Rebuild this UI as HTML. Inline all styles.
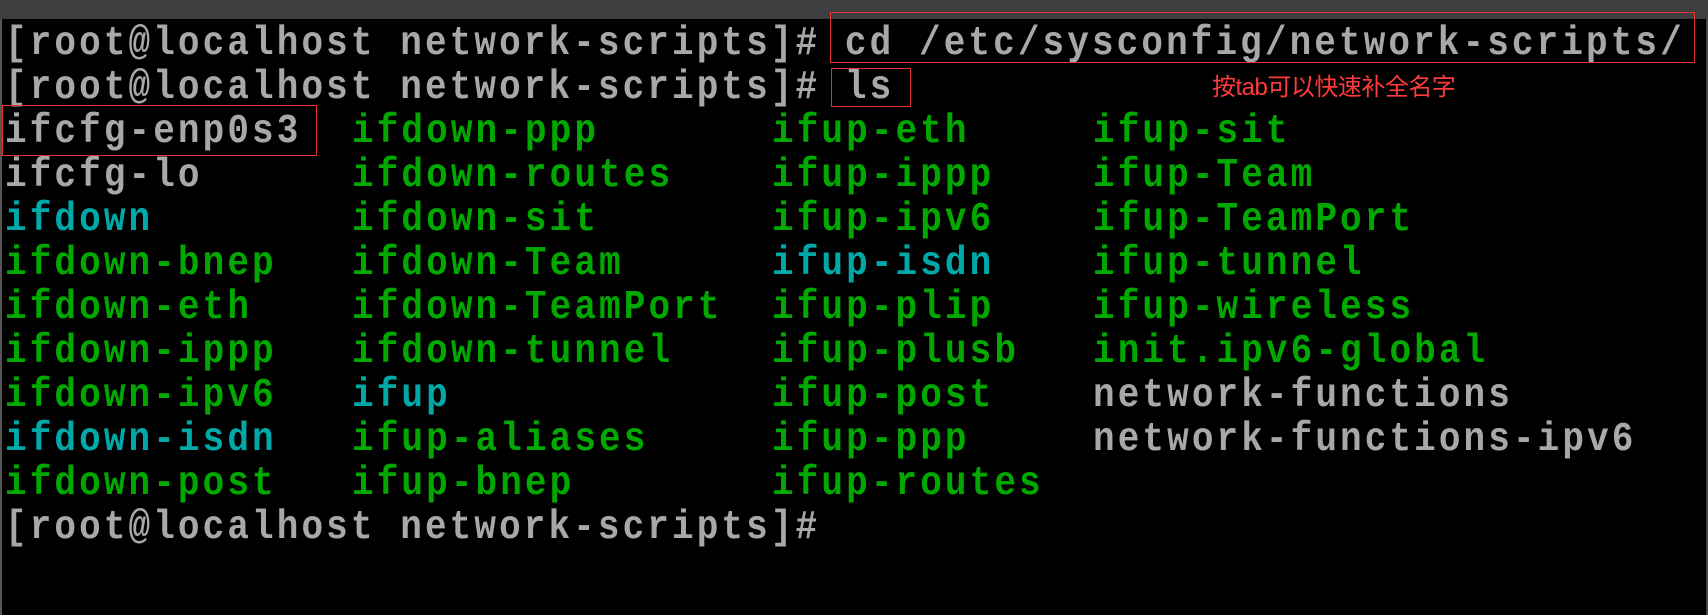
<!DOCTYPE html>
<html><head><meta charset="utf-8"><style>
html,body{margin:0;padding:0;background:#000;width:1708px;height:615px;overflow:hidden;position:relative}
.top{position:absolute;left:0;top:0;width:1708px;height:19px;background:#3d3e40}
.lb{position:absolute;left:0;top:19px;width:2px;height:596px;background:#555}
.rb{position:absolute;right:0;top:19px;width:2px;height:596px;background:#444}
.r{position:absolute;height:44px;line-height:44px;white-space:pre;font-family:"Liberation Mono",monospace;font-size:36px;font-weight:bold;letter-spacing:3.1px;transform:scaleY(1.12);transform-origin:0 50%;color:#a8a8a8}
.g{color:#00a800}.c{color:#00a8a8}
.box{position:absolute;border:1px solid #e53333}
.note{position:absolute;left:1212px;top:67px;font-family:"Liberation Sans","Noto Sans CJK SC",sans-serif;font-size:24px;color:#ff3a3a;letter-spacing:-0.5px}
</style></head><body>
<div class="top"></div><div class="lb"></div><div class="rb"></div>
<div class="r" style="left:5px;top:22px">[root@localhost network-scripts]# cd /etc/sysconfig/network-scripts/</div>
<div class="r" style="left:5px;top:66px">[root@localhost network-scripts]# ls</div>
<div class="r" style="left:5px;top:110px">ifcfg-enp0s3</div><div class="r g" style="left:352px;top:110px">ifdown-ppp</div><div class="r g" style="left:772px;top:110px">ifup-eth</div><div class="r g" style="left:1093px;top:110px">ifup-sit</div>
<div class="r" style="left:5px;top:154px">ifcfg-lo</div><div class="r g" style="left:352px;top:154px">ifdown-routes</div><div class="r g" style="left:772px;top:154px">ifup-ippp</div><div class="r g" style="left:1093px;top:154px">ifup-Team</div>
<div class="r c" style="left:5px;top:198px">ifdown</div><div class="r g" style="left:352px;top:198px">ifdown-sit</div><div class="r g" style="left:772px;top:198px">ifup-ipv6</div><div class="r g" style="left:1093px;top:198px">ifup-TeamPort</div>
<div class="r g" style="left:5px;top:242px">ifdown-bnep</div><div class="r g" style="left:352px;top:242px">ifdown-Team</div><div class="r c" style="left:772px;top:242px">ifup-isdn</div><div class="r g" style="left:1093px;top:242px">ifup-tunnel</div>
<div class="r g" style="left:5px;top:286px">ifdown-eth</div><div class="r g" style="left:352px;top:286px">ifdown-TeamPort</div><div class="r g" style="left:772px;top:286px">ifup-plip</div><div class="r g" style="left:1093px;top:286px">ifup-wireless</div>
<div class="r g" style="left:5px;top:330px">ifdown-ippp</div><div class="r g" style="left:352px;top:330px">ifdown-tunnel</div><div class="r g" style="left:772px;top:330px">ifup-plusb</div><div class="r g" style="left:1093px;top:330px">init.ipv6-global</div>
<div class="r g" style="left:5px;top:374px">ifdown-ipv6</div><div class="r c" style="left:352px;top:374px">ifup</div><div class="r g" style="left:772px;top:374px">ifup-post</div><div class="r" style="left:1093px;top:374px">network-functions</div>
<div class="r c" style="left:5px;top:418px">ifdown-isdn</div><div class="r g" style="left:352px;top:418px">ifup-aliases</div><div class="r g" style="left:772px;top:418px">ifup-ppp</div><div class="r" style="left:1093px;top:418px">network-functions-ipv6</div>
<div class="r g" style="left:5px;top:462px">ifdown-post</div><div class="r g" style="left:352px;top:462px">ifup-bnep</div><div class="r g" style="left:772px;top:462px">ifup-routes</div>
<div class="r" style="left:5px;top:506px">[root@localhost network-scripts]#</div>
<div class="box" style="left:830px;top:12px;width:863px;height:49px"></div>
<div class="box" style="left:831px;top:68px;width:78px;height:37px"></div>
<div class="box" style="left:2px;top:105px;width:313px;height:49px"></div>
<div class="note">按tab可以快速补全名字</div>
</body></html>
